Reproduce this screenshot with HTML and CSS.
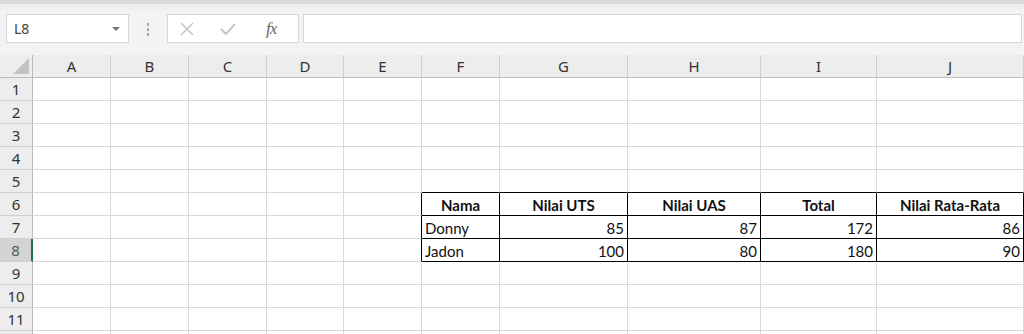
FILE: index.html
```html
<!DOCTYPE html>
<html lang="en">
<head>
  <meta charset="UTF-8">
  <title>Nilai Siswa</title>
  <link rel="stylesheet" href="styles.css">
</head>
<body>

  <div class="toolbar">
    <div class="name-box">
      <span>L8</span>
      <span class="caret"></span>
    </div>
    <div class="grip"><i></i><i></i><i></i></div>
    <div class="fn-box">
      <svg class="ico-x" width="16" height="16" viewBox="0 0 16 16"><path d="M2 2 L14 14 M14 2 L2 14" stroke="#c6c6c6" stroke-width="1.6" fill="none"/></svg>
      <svg class="ico-ok" width="18" height="16" viewBox="0 0 18 16"><path d="M2 8 L7 13 L16 3" stroke="#c6c6c6" stroke-width="2" fill="none"/></svg>
      <span class="fx">fx</span>
    </div>
    <div class="formula"></div>
  </div>

  <div class="sheet">
    <div class="corner"><span class="tri"></span></div>
    <div class="col">A</div><div class="col">B</div><div class="col">C</div><div class="col">D</div><div class="col">E</div>
    <div class="col">F</div><div class="col">G</div><div class="col">H</div><div class="col">I</div><div class="col">J</div>

    <div class="row">1</div><div class="c"></div><div class="c"></div><div class="c"></div><div class="c"></div><div class="c"></div><div class="c"></div><div class="c"></div><div class="c"></div><div class="c"></div><div class="c"></div>
    <div class="row">2</div><div class="c"></div><div class="c"></div><div class="c"></div><div class="c"></div><div class="c"></div><div class="c"></div><div class="c"></div><div class="c"></div><div class="c"></div><div class="c"></div>
    <div class="row">3</div><div class="c"></div><div class="c"></div><div class="c"></div><div class="c"></div><div class="c"></div><div class="c"></div><div class="c"></div><div class="c"></div><div class="c"></div><div class="c"></div>
    <div class="row">4</div><div class="c"></div><div class="c"></div><div class="c"></div><div class="c"></div><div class="c"></div><div class="c"></div><div class="c"></div><div class="c"></div><div class="c"></div><div class="c"></div>
    <div class="row">5</div><div class="c"></div><div class="c"></div><div class="c"></div><div class="c"></div><div class="c"></div><div class="c above"></div><div class="c above"></div><div class="c above"></div><div class="c above"></div><div class="c above"></div>

    <div class="row">6</div><div class="c"></div><div class="c"></div><div class="c"></div><div class="c"></div><div class="c before"></div>
    <div class="c t head">Nama</div><div class="c t head">Nilai UTS</div><div class="c t head">Nilai UAS</div><div class="c t head">Total</div><div class="c t head">Nilai Rata-Rata</div>

    <div class="row">7</div><div class="c"></div><div class="c"></div><div class="c"></div><div class="c"></div><div class="c before"></div>
    <div class="c t">Donny</div><div class="c t num">85</div><div class="c t num">87</div><div class="c t num">172</div><div class="c t num">86</div>

    <div class="row sel">8</div><div class="c"></div><div class="c"></div><div class="c"></div><div class="c"></div><div class="c before"></div>
    <div class="c t">Jadon</div><div class="c t num">100</div><div class="c t num">80</div><div class="c t num">180</div><div class="c t num">90</div>

    <div class="row">9</div><div class="c"></div><div class="c"></div><div class="c"></div><div class="c"></div><div class="c"></div><div class="c"></div><div class="c"></div><div class="c"></div><div class="c"></div><div class="c"></div>
    <div class="row">10</div><div class="c"></div><div class="c"></div><div class="c"></div><div class="c"></div><div class="c"></div><div class="c"></div><div class="c"></div><div class="c"></div><div class="c"></div><div class="c"></div>
    <div class="row">11</div><div class="c"></div><div class="c"></div><div class="c"></div><div class="c"></div><div class="c"></div><div class="c"></div><div class="c"></div><div class="c"></div><div class="c"></div><div class="c"></div>
    <div class="row"></div><div class="c"></div><div class="c"></div><div class="c"></div><div class="c"></div><div class="c"></div><div class="c"></div><div class="c"></div><div class="c"></div><div class="c"></div><div class="c"></div>
  </div>

</body>
</html>
```

FILE: styles.css
```css
* {
  margin: 0;
  padding: 0;
  box-sizing: border-box;
}

body {
  width: 1024px;
  height: 334px;
  overflow: hidden;
  background-color: #f3f3f3;
  font-family: "Noto Sans", "Open Sans", sans-serif;
  color: #333;
}

.toolbar {
  height: 55px;
  display: flex;
  align-items: flex-start;
  padding: 14px 2px 0 6px;
  border-top: 4px solid #dadada;
  background: linear-gradient(#ececec, #f3f3f3 8px);
}

.name-box {
  margin-top: -4px;
  width: 123px;
  height: 29px;
  display: flex;
  align-items: center;
  justify-content: space-between;
  padding: 0 8px 0 7px;
  background-color: #fff;
  border: 1px solid #d6d6d6;
  font-size: 14px;
  color: #444;
}

.caret {
  width: 0;
  height: 0;
  border-left: 4px solid transparent;
  border-right: 4px solid transparent;
  border-top: 4px solid #777;
}

.grip {
  margin: 5px 0 0 0;
  width: 38px;
  display: flex;
  flex-direction: column;
  align-items: center;
  gap: 2px;
}

.grip i {
  width: 2px;
  height: 3px;
  background-color: #a8a8a8;
}

.fn-box {
  margin-top: -4px;
  width: 132px;
  height: 29px;
  display: flex;
  align-items: center;
  padding: 0 0 0 11px;
  background-color: #fff;
  border: 1px solid #d6d6d6;
}

.ico-ok {
  margin-left: 24px;
}

.fx {
  margin-left: 29px;
  font-family: "Liberation Serif", serif;
  font-style: italic;
  font-size: 17px;
  color: #666;
  letter-spacing: -1px;
}

.formula {
  margin: -4px 0 0 4px;
  flex: 1;
  height: 29px;
  background-color: #fff;
  border: 1px solid #d6d6d6;
}

.sheet {
  display: grid;
  grid-template-columns: 33px 78px 78px 78px 77px 78px 78px 128px 133px 116px 147px;
  grid-auto-rows: 23px;
  background-color: #fff;
}

.corner,
.col {
  background-color: #ededed;
  border-right: 1px solid #d0d0d0;
  border-bottom: 1px solid #bcbcbc;
  font-size: 15px;
  color: #333;
  display: flex;
  align-items: center;
  justify-content: center;
}

.corner {
  position: relative;
  border-right-color: #bcbcbc;
}

.tri {
  position: absolute;
  right: 3px;
  bottom: 3px;
  width: 0;
  height: 0;
  border-left: 16px solid transparent;
  border-bottom: 16px solid #c2c2c2;
}

.row {
  background-color: #ededed;
  border-right: 1px solid #bcbcbc;
  border-bottom: 1px solid #d0d0d0;
  font-size: 15px;
  color: #333;
  display: flex;
  align-items: center;
  justify-content: center;
}

.row.sel {
  background-color: #d3d3d3;
  border-right: 2px solid #217346;
  color: #45695c;
}

.c {
  border-right: 1px solid #d9d9d9;
  border-bottom: 1px solid #d9d9d9;
  font-family: Lato, "Liberation Sans", sans-serif;
  font-size: 15px;
  color: #111;
  display: flex;
  align-items: flex-end;
  padding: 0 3px 1px 3px;
}

.c.above {
  border-bottom-color: #000;
}

.c.before {
  border-right-color: #000;
}

.c.t {
  border-right-color: #000;
  border-bottom-color: #000;
}

.c.head {
  font-weight: bold;
  justify-content: center;
}

.c.num {
  justify-content: flex-end;
}
```
